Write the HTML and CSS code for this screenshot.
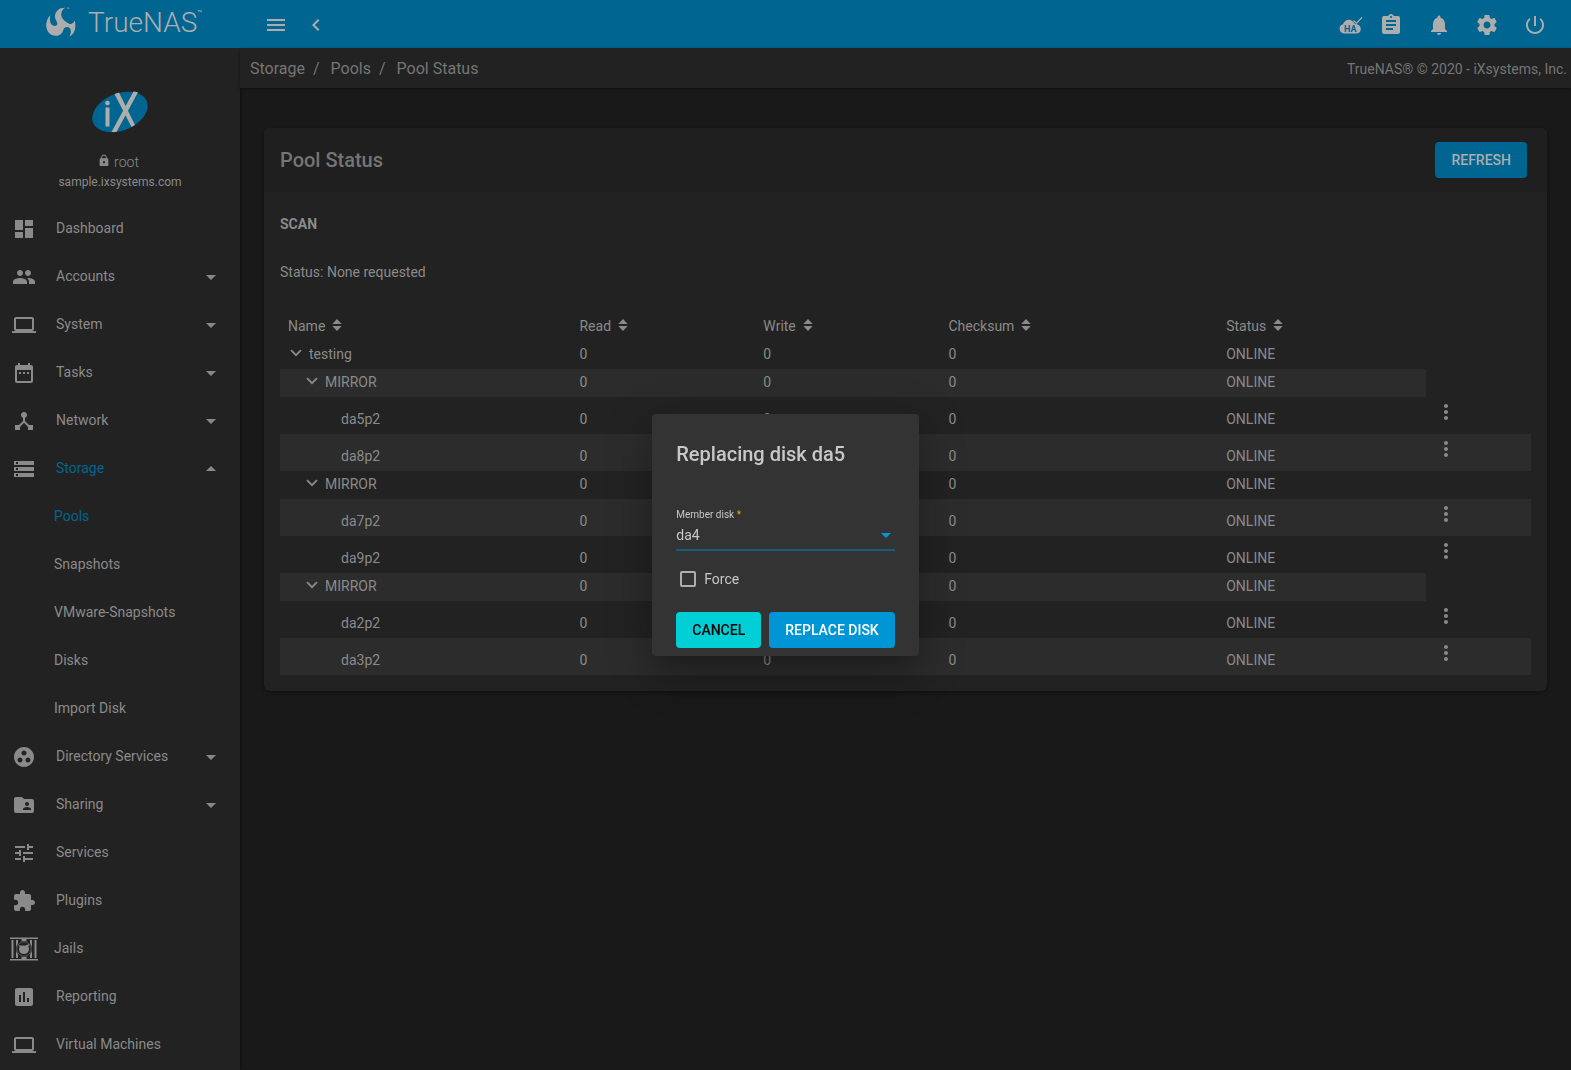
FILE: index.html
```html
<!DOCTYPE html>
<html lang="en">
<head>
<meta charset="utf-8">
<title>TrueNAS - Pool Status</title>
<link rel="stylesheet" href="styles.css">
</head>
<body>
<svg class="defs" aria-hidden="true">
  <symbol id="down" viewBox="0 0 24 24"><path d="M7 10l5 5 5-5z"/></symbol>
  <symbol id="up" viewBox="0 0 24 24"><path d="M7 14l5-5 5 5z"/></symbol>
  <symbol id="laptop" viewBox="0 0 24 24"><path d="M20 18c1.100 0 1.990-.9 1.990-2L22 6c0-1.100-.9-2-2-2H4c-1.100 0-2 .9-2 2v10c0 1.100.9 2 2 2H0v2h24v-2h-4zM4 6h16v10H4V6z"/></symbol>
  <symbol id="dots" viewBox="0 0 24 24"><path d="M12 8c1.100 0 2-.9 2-2s-.9-2-2-2-2 .9-2 2 .9 2 2 2zm0 2c-1.100 0-2 .9-2 2s.9 2 2 2 2-.9 2-2-.9-2-2-2zm0 6c-1.100 0-2 .9-2 2s.9 2 2 2 2-.9 2-2-.9-2-2-2z"/></symbol>
  <symbol id="sort" viewBox="0 0 10 12"><path d="M5 0l4.700 5H.3zM5 12L.3 7h9.400z"/></symbol>
  <symbol id="chev" viewBox="0 0 12 8"><path d="M1 1.200l5 5 5-5" fill="none" stroke="currentColor" stroke-width="1.800"/></symbol>
</svg>
<div class="app">
  <aside class="sidebar">
    <a class="brand" href="#" aria-label="TrueNAS">
      <svg class="brand-mark" viewBox="0 0 30 30"><path d="M19.500.8C13.500.5 9 4 9 9.500c0 3.500 2.500 5 2.300 7.200-.2 1.800-2 2.600-3.700 2.100C4.500 18 3.200 13.500 4.300 8 1.500 11 0 15 .2 19c.3 5.500 4.300 9.800 9.300 9.800 4.500 0 6.800-2.600 7.700-5.600.8-2.600 2.500-3.600 4.500-3.200 3 .6 4.300 4.500 1.800 9.500 4.200-2 5.800-6.500 5.800-10 0-2 .3-3.500-.7-6-1 3-3.400 4.300-6 3-4.500-2.200-8-6-7.300-10.200C15.800 3.500 17.300 1.500 19.500.8zM20 1l3.500.800-.8-1.200z"/></svg>
      <span class="brand-name">TrueNAS</span><span class="brand-tm">™</span>
    </a>
    <div class="user">
      <svg class="ix" viewBox="0 0 58 44" role="img" aria-label="iX"><g><ellipse cx="29" cy="22" rx="29" ry="18.500" transform="rotate(-22 29 22)" class="ix-bg"/><circle cx="16.500" cy="13" r="2.300"/><path d="M14.500 17.500h4v19h-4zM23.500 4l4.500-1.500L44 35l-3.500 2zM42.500 1.500l4.500.8L25.500 42h-5z"/></g></svg>
      <div class="user-name"><svg viewBox="3 0 18 22"><path d="M18 8h-1V6c0-2.760-2.240-5-5-5S7 3.240 7 6v2H6c-1.100 0-2 .9-2 2v10c0 1.100.9 2 2 2h12c1.100 0 2-.9 2-2V10c0-1.100-.9-2-2-2zm-6 9c-1.100 0-2-.9-2-2s.9-2 2-2 2 .9 2 2-.9 2-2 2zm3.100-9H8.900V6c0-1.710 1.390-3.100 3.100-3.100s3.100 1.390 3.100 3.100v2z"/></svg>root</div>
      <div class="user-host">sample.ixsystems.com</div>
    </div>
    <nav class="nav">
      <a href="#"><svg viewBox="0 0 24 24"><path d="M3 13h8V3H3v10zm0 8h8v-6H3v6zm10 0h8V11h-8v10zm0-18v6h8V3h-8z"/></svg><span>Dashboard</span></a>
      <a href="#"><svg viewBox="0 0 24 24"><path d="M16 11c1.660 0 2.990-1.340 2.990-3S17.660 5 16 5s-3 1.340-3 3 1.340 3 3 3zm-8 0c1.660 0 2.990-1.340 2.990-3S9.660 5 8 5 5 6.340 5 8s1.340 3 3 3zm0 2c-2.330 0-7 1.170-7 3.500V19h14v-2.500c0-2.330-4.670-3.500-7-3.500zm8 0c-.29 0-.62.020-.97.050 1.160.84 1.970 1.970 1.970 3.450V19h6v-2.500c0-2.330-4.670-3.500-7-3.500z"/></svg><span>Accounts</span><svg><use href="#down"/></svg></a>
      <a href="#"><svg><use href="#laptop"/></svg><span>System</span><svg><use href="#down"/></svg></a>
      <a href="#"><svg viewBox="0 0 24 24"><path d="M9 11H7v2h2v-2zm4 0h-2v2h2v-2zm4 0h-2v2h2v-2zm2-7h-1V2h-2v2H8V2H6v2H5c-1.110 0-1.990.9-1.990 2L3 20c0 1.100.89 2 2 2h14c1.100 0 2-.9 2-2V6c0-1.100-.9-2-2-2zm0 16H5V9h14v11z"/></svg><span>Tasks</span><svg><use href="#down"/></svg></a>
      <a href="#"><svg viewBox="0 0 24 24"><path d="M17 16l-4-4V8.820C14.160 8.400 15 7.300 15 6c0-1.660-1.340-3-3-3S9 4.340 9 6c0 1.300.84 2.400 2 2.820V12l-4 4H3v5h5v-3.050l4-4.200 4 4.200V21h5v-5h-4z"/></svg><span>Network</span><svg><use href="#down"/></svg></a>
      <a href="#" class="open"><svg viewBox="0 0 24 24"><path d="M2 20h20v-4H2v4zm2-3h2v2H4v-2zM2 4v4h20V4H2zm4 3H4V5h2v2zm-4 7h20v-4H2v4zm2-3h2v2H4v-2z"/></svg><span>Storage</span><svg><use href="#up"/></svg></a>
      <a href="#" class="sub current">Pools</a>
      <a href="#" class="sub">Snapshots</a>
      <a href="#" class="sub">VMware-Snapshots</a>
      <a href="#" class="sub">Disks</a>
      <a href="#" class="sub">Import Disk</a>
      <a href="#"><svg viewBox="0 0 24 24"><path d="M12 2C6.480 2 2 6.480 2 12s4.480 10 10 10 10-4.480 10-10S17.520 2 12 2zM8 17.500c-1.380 0-2.500-1.120-2.500-2.500s1.120-2.500 2.500-2.500 2.500 1.120 2.500 2.500-1.120 2.500-2.500 2.500zM9.500 8c0-1.380 1.120-2.500 2.500-2.500s2.500 1.120 2.500 2.500-1.120 2.500-2.500 2.500S9.500 9.380 9.500 8zm6.500 9.500c-1.380 0-2.500-1.120-2.500-2.500s1.120-2.500 2.500-2.500 2.500 1.120 2.500 2.500-1.120 2.500-2.500 2.500z"/></svg><span>Directory Services</span><svg><use href="#down"/></svg></a>
      <a href="#"><svg viewBox="0 0 24 24"><path d="M20 6h-8l-2-2H4c-1.100 0-1.990.9-1.990 2L2 18c0 1.100.9 2 2 2h16c1.100 0 2-.9 2-2V8c0-1.100-.9-2-2-2zm-5 3c1.100 0 2 .9 2 2s-.9 2-2 2-2-.9-2-2 .9-2 2-2zm4 8h-8v-1c0-1.330 2.670-2 4-2s4 .67 4 2v1z"/></svg><span>Sharing</span><svg><use href="#down"/></svg></a>
      <a href="#"><svg viewBox="0 0 24 24"><path d="M3 17v2h6v-2H3zM3 5v2h10V5H3zm10 16v-2h8v-2h-8v-2h-2v6h2zM7 9v2H3v2h4v2h2V9H7zm14 4v-2H11v2h10zm-6-4h2V7h4V5h-4V3h-2v6z"/></svg><span>Services</span></a>
      <a href="#"><svg viewBox="0 0 24 24"><path d="M20.500 11H19V7c0-1.100-.9-2-2-2h-4V3.500C13 2.120 11.880 1 10.500 1S8 2.120 8 3.500V5H4c-1.100 0-1.990.9-1.990 2v3.800H3.500c1.490 0 2.700 1.210 2.700 2.700s-1.210 2.700-2.700 2.700H2V20c0 1.100.9 2 2 2h3.800v-1.500c0-1.490 1.210-2.700 2.700-2.700 1.490 0 2.700 1.210 2.700 2.700V22H17c1.100 0 2-.9 2-2v-4h1.500c1.380 0 2.500-1.120 2.500-2.500S21.880 11 20.500 11z"/></svg><span>Plugins</span></a>
      <a href="#" class="jails"><svg viewBox="0 0 28 24"><path d="M0 .5h28v1.500H0zM0 22h28v1.500H0zM1.500 3h2v18h-2zM6 3h2v18H6zM11.500 2h5v20h-5zM20 3h2v18h-2zM24.500 3h2v18h-2z"/><circle cx="14" cy="12" r="8" class="jail-ring"/><circle cx="14" cy="12" r="7.200" class="jail-hole"/><path d="M9 8l3 .8c1-.4 2-.4 3 0L19 7l-.5 3c1.500 3.500-.5 7-4.500 7s-6-3.500-4.500-7z"/></svg><span>Jails</span></a>
      <a href="#"><svg viewBox="0 0 24 24"><path d="M19 3H5c-1.100 0-2 .9-2 2v14c0 1.100.9 2 2 2h14c1.100 0 2-.9 2-2V5c0-1.100-.9-2-2-2zM9 17H7v-7h2v7zm4 0h-2V7h2v10zm4 0h-2v-4h2v4z"/></svg><span>Reporting</span></a>
      <a href="#"><svg><use href="#laptop"/></svg><span>Virtual Machines</span></a>
    </nav>
  </aside>
  <div class="content">
    <header class="topbar">
      <button type="button" aria-label="Menu"><svg viewBox="0 0 24 24"><path d="M3 18h18v-2H3v2zm0-5h18v-2H3v2zm0-7v2h18V6H3z"/></svg></button>
      <button type="button" aria-label="Back"><svg viewBox="0 0 24 24"><path d="M15.410 7.410L14 6l-6 6 6 6 1.410-1.410L10.830 12z"/></svg></button>
      <div class="tools">
        <button type="button" class="ha" aria-label="High availability"><svg viewBox="0 0 24 24"><path d="M5 20.500a4.700 4.700 0 0 1-1-9.200C5 8 8.500 6 12 7.200c1 .4 1.900 1 2.500 1.800l1 1.500 2 .5c.5 1 3.500.8 4 3.500 1 3-1 6-4 6z"/><path d="M14.500 7.500l3 2.700L23 4.500" class="ha-tick"/><text x="5" y="18.500">HA</text></svg></button>
        <button type="button" aria-label="Task manager"><svg viewBox="0 0 24 24"><path d="M19 3h-4.180C14.400 1.840 13.300 1 12 1c-1.300 0-2.400.84-2.820 2H5c-1.100 0-2 .9-2 2v14c0 1.100.9 2 2 2h14c1.100 0 2-.9 2-2V5c0-1.100-.9-2-2-2zm-7 0c.55 0 1 .45 1 1s-.45 1-1 1-1-.45-1-1 .45-1 1-1zm2 14H7v-2h7v2zm3-4H7v-2h10v2zm0-4H7V7h10v2z"/></svg></button>
        <button type="button" aria-label="Notifications"><svg viewBox="0 0 24 24"><path d="M12 22c1.100 0 2-.9 2-2h-4c0 1.100.89 2 2 2zm6-6v-5c0-3.070-1.640-5.640-4.500-6.320V4c0-.83-.67-1.500-1.500-1.500s-1.500.67-1.500 1.500v.68C7.630 5.360 6 7.920 6 11v5l-2 2v1h16v-1l-2-2z"/></svg></button>
        <button type="button" aria-label="Settings"><svg viewBox="0 0 24 24"><path d="M19.430 12.980c.04-.32.070-.64.070-.98s-.03-.66-.07-.98l2.110-1.650c.19-.15.24-.42.120-.64l-2-3.460c-.12-.22-.39-.3-.61-.22l-2.490 1c-.52-.4-1.080-.73-1.690-.98l-.38-2.650C14.460 2.180 14.250 2 14 2h-4c-.25 0-.46.180-.49.420l-.38 2.650c-.61.250-1.170.590-1.690.98l-2.490-1c-.23-.09-.49 0-.61.220l-2 3.460c-.13.220-.07.490.12.640l2.110 1.650c-.04.320-.07.650-.07.980s.03.660.07.980l-2.110 1.650c-.19.150-.24.420-.12.640l2 3.460c.12.220.39.300.61.220l2.490-1c.52.400 1.080.730 1.690.98l.38 2.650c.03.240.24.420.49.420h4c.25 0 .46-.18.490-.42l.38-2.650c.61-.25 1.170-.59 1.690-.98l2.490 1c.23.090.49 0 .61-.22l2-3.460c.12-.22.070-.49-.12-.64l-2.110-1.650zM12 15.500c-1.930 0-3.500-1.570-3.500-3.500s1.570-3.500 3.500-3.500 3.500 1.570 3.500 3.500-1.570 3.500-3.500 3.500z"/></svg></button>
        <button type="button" aria-label="Power"><svg viewBox="0 0 24 24"><path d="M13 3h-2v10h2V3zm4.830 2.170l-1.420 1.420C17.990 7.860 19 9.810 19 12c0 3.870-3.130 7-7 7s-7-3.130-7-7c0-2.190 1.010-4.140 2.580-5.420L6.170 5.170C4.230 6.820 3 9.260 3 12c0 4.970 4.030 9 9 9s9-4.030 9-9c0-2.740-1.230-5.180-3.170-6.830z"/></svg></button>
      </div>
    </header>
    <div class="crumbs">
      <nav><a href="#">Storage</a><i>/</i><a href="#">Pools</a><i>/</i><a href="#">Pool Status</a></nav>
      <span>TrueNAS® © 2020 - iXsystems, Inc.</span>
    </div>
    <main>
      <section class="card">
        <div class="card-head"><h1>Pool Status</h1><button type="button" class="btn btn-dim">REFRESH</button></div>
        <div class="card-body">
          <h2>SCAN</h2>
          <p>Status: None requested</p>
          <table>
            <colgroup><col class="c-name"><col class="c-read"><col class="c-write"><col class="c-sum"><col class="c-status"><col></colgroup>
            <thead><tr><th>Name<svg><use href="#sort"/></svg></th><th>Read<svg><use href="#sort"/></svg></th><th>Write<svg><use href="#sort"/></svg></th><th>Checksum<svg><use href="#sort"/></svg></th><th>Status<svg><use href="#sort"/></svg></th></tr></thead>
            <tbody>
              <tr><td><svg class="chev"><use href="#chev"/></svg>testing</td><td>0</td><td>0</td><td>0</td><td>ONLINE</td></tr>
              <tr><td class="l1"><svg class="chev"><use href="#chev"/></svg>MIRROR</td><td>0</td><td>0</td><td>0</td><td>ONLINE</td></tr>
              <tr><td class="l2">da5p2</td><td>0</td><td>0</td><td>0</td><td>ONLINE</td><td class="act"><button type="button" aria-label="Options"><svg><use href="#dots"/></svg></button></td></tr>
              <tr><td class="l2">da8p2</td><td>0</td><td>0</td><td>0</td><td>ONLINE</td><td class="act"><button type="button" aria-label="Options"><svg><use href="#dots"/></svg></button></td></tr>
              <tr><td class="l1"><svg class="chev"><use href="#chev"/></svg>MIRROR</td><td>0</td><td>0</td><td>0</td><td>ONLINE</td></tr>
              <tr><td class="l2">da7p2</td><td>0</td><td>0</td><td>0</td><td>ONLINE</td><td class="act"><button type="button" aria-label="Options"><svg><use href="#dots"/></svg></button></td></tr>
              <tr><td class="l2">da9p2</td><td>0</td><td>0</td><td>0</td><td>ONLINE</td><td class="act"><button type="button" aria-label="Options"><svg><use href="#dots"/></svg></button></td></tr>
              <tr><td class="l1"><svg class="chev"><use href="#chev"/></svg>MIRROR</td><td>0</td><td>0</td><td>0</td><td>ONLINE</td></tr>
              <tr><td class="l2">da2p2</td><td>0</td><td>0</td><td>0</td><td>ONLINE</td><td class="act"><button type="button" aria-label="Options"><svg><use href="#dots"/></svg></button></td></tr>
              <tr><td class="l2">da3p2</td><td>0</td><td>0</td><td>0</td><td>ONLINE</td><td class="act"><button type="button" aria-label="Options"><svg><use href="#dots"/></svg></button></td></tr>
            </tbody>
          </table>
        </div>
      </section>
    </main>
  </div>
</div>
<div class="backdrop">
  <form class="dialog" role="dialog" aria-labelledby="dialog-title">
    <h2 id="dialog-title">Replacing disk da5</h2>
    <label class="field-label" for="disk">Member disk <b>*</b></label>
    <div class="select"><select id="disk"><option>da4</option></select><svg><use href="#down"/></svg></div>
    <div class="check"><input type="checkbox" id="force"><label for="force">Force</label></div>
    <div class="actions"><button type="button" class="btn btn-cancel">CANCEL</button><button type="submit" class="btn btn-primary">REPLACE DISK</button></div>
  </form>
</div>
</body>
</html>
```
FILE: styles.css
```css
* { box-sizing: border-box; }

body {
  margin: 0;
  background: #191919;
  color: #8a8a8a;
  font: 14px/20px Roboto, sans-serif;
}

h1, h2, p { margin: 0; }
a { color: inherit; text-decoration: none; }
svg { display: block; fill: currentColor; flex: none; }
button { font: inherit; color: inherit; background: none; border: 0; padding: 0; }
.defs { position: absolute; width: 0; height: 0; }

.app { display: flex; min-height: 100vh; }

/* Sidebar */
.sidebar { width: 240px; flex: none; background: #222; box-shadow: 1px 0 3px rgba(0, 0, 0, .4); }
.brand {
  display: flex;
  align-items: center;
  height: 48px;
  padding: 0 0 4px 46px;
  background: #006591;
  color: #adadad;
}
.brand-mark { width: 30px; height: 30px; }
.brand-name { margin-left: 12px; padding-top: 2px; font-size: 28px; line-height: 32px; font-weight: 300; }
.brand-tm { align-self: flex-start; padding-top: 4px; font-size: 8px; }
.user { display: flex; flex-direction: column; align-items: center; height: 156px; padding-top: 42px; }
.ix { width: 58px; height: 44px; color: #adadad; }
.ix-bg { fill: #006591; }
.user-name { display: flex; gap: 5px; margin-top: 18px; padding-right: 2px; font-weight: 300; line-height: 20px; }
.user-name svg { width: 10px; height: 12px; margin-top: 2px; }
.user-host { font-size: 12px; }
.nav a { display: flex; align-items: center; height: 48px; padding: 0 17px 0 12px; }
.nav svg { width: 24px; height: 24px; margin-top: 2px; }
.nav span { flex: 1; padding-left: 20px; }
.nav .sub { padding-left: 54px; }
.nav .open span, .nav .current { color: #006591; }
.nav .jails { padding-left: 10px; }
.nav .jails svg { width: 28px; }
.nav .jails span { padding-left: 16px; }
.jail-ring { fill: #222; }
.jail-hole { fill: none; stroke: #555; }

/* Top bar */
.content { flex: 1; min-width: 0; }
.topbar { display: flex; align-items: center; gap: 16px; height: 48px; padding: 2px 24px 0; background: #006591; color: #adadad; }
.topbar svg { width: 24px; height: 24px; }
.tools { display: flex; gap: 24px; margin-left: auto; }
.ha { margin-right: -8px; }
.ha-tick { fill: none; stroke: #adadad; stroke-width: 1.2; }
.ha text { font: 700 9px Roboto, sans-serif; fill: #006591; }
.crumbs {
  display: flex;
  justify-content: space-between;
  align-items: center;
  height: 40px;
  padding: 1px 4px 0 10px;
  background: #222;
  color: #757575;
  box-shadow: 0 1px 3px rgba(0, 0, 0, .4);
}
.crumbs nav { font-size: 16px; }
.crumbs i { padding: 0 11px 0 8px; font-style: normal; }

/* Card */
main { padding: 40px 24px 24px; }
.card { background: #222; border-radius: 6px; box-shadow: 0 1px 4px rgba(0, 0, 0, .4); }
.card-head {
  display: flex;
  justify-content: space-between;
  align-items: center;
  height: 64px;
  padding: 0 20px 0 16px;
  background: #1f1f1f;
  border-radius: 6px 6px 0 0;
}
.card-head h1 { font-size: 20px; font-weight: 500; color: #757575; }
.card-body { padding: 22px 16px 16px; }
.card-body h2 { font-size: 14px; font-weight: 700; }
.card-body p { padding: 28px 0 31px; }
.btn { height: 36px; padding: 0 16px; border-radius: 4px; font-weight: 500; white-space: nowrap; }
.btn-dim { background: #006591; color: #adadad; }

/* Pool table */
table { width: 100%; table-layout: fixed; border-collapse: collapse; }
.c-name { width: 23.3%; }
.c-read { width: 14.7%; }
.c-write { width: 14.8%; }
.c-sum { width: 22.2%; }
.c-status { width: 16.6%; }
th, td { padding: 4px 8px 6px; line-height: 18px; font-weight: 400; text-align: left; vertical-align: bottom; }
th svg { display: inline-block; width: 10px; height: 12px; margin-left: 7px; }
tbody tr:nth-child(even) td { background: #2c2c2c; }
.chev { display: inline-block; width: 12px; height: 8px; margin: 0 7px 2px 2px; }
td.l1 { padding-left: 24px; }
td.l2 { padding-left: 61px; }
td.act { padding: 3px 8px 10px; }
.act button, .act svg { display: block; width: 24px; height: 24px; }

/* Dialog */
.backdrop { position: fixed; inset: 0; display: flex; align-items: center; justify-content: center; }
.dialog {
  padding: 24px 24px 8px;
  background: #333;
  border-radius: 4px;
  color: #c8c8c8;
  box-shadow: 0 11px 15px -7px rgba(0, 0, 0, .2), 0 24px 38px 3px rgba(0, 0, 0, .14), 0 9px 46px 8px rgba(0, 0, 0, .12);
}
.dialog h2 { font-size: 20px; line-height: 32px; font-weight: 500; }
.field-label { display: block; margin-top: 38px; font-size: 10px; line-height: 14px; }
.field-label b { color: #e0ab00; font-weight: 400; }
.select { display: grid; align-items: center; border-bottom: 2px solid #1a5c7b; }
.select > * { grid-area: 1 / 1; }
.select select { width: 100%; height: 27px; border: 0; padding: 0 0 2px; appearance: none; background: none; color: inherit; font: inherit; }
.select svg { justify-self: end; width: 24px; height: 24px; margin: 0 -3px 2px 0; color: #0095d5; pointer-events: none; }
.check { display: flex; align-items: center; gap: 8px; padding: 18px 0 0 4px; }
.check input { width: 16px; height: 16px; margin: 0; border: 2px solid #adadad; border-radius: 2px; appearance: none; }
.actions { display: flex; gap: 8px; margin-top: 23px; }
.btn-cancel { background: #00d0d6; color: #000; }
.btn-primary { background: #0095d5; color: #fff; }
```
